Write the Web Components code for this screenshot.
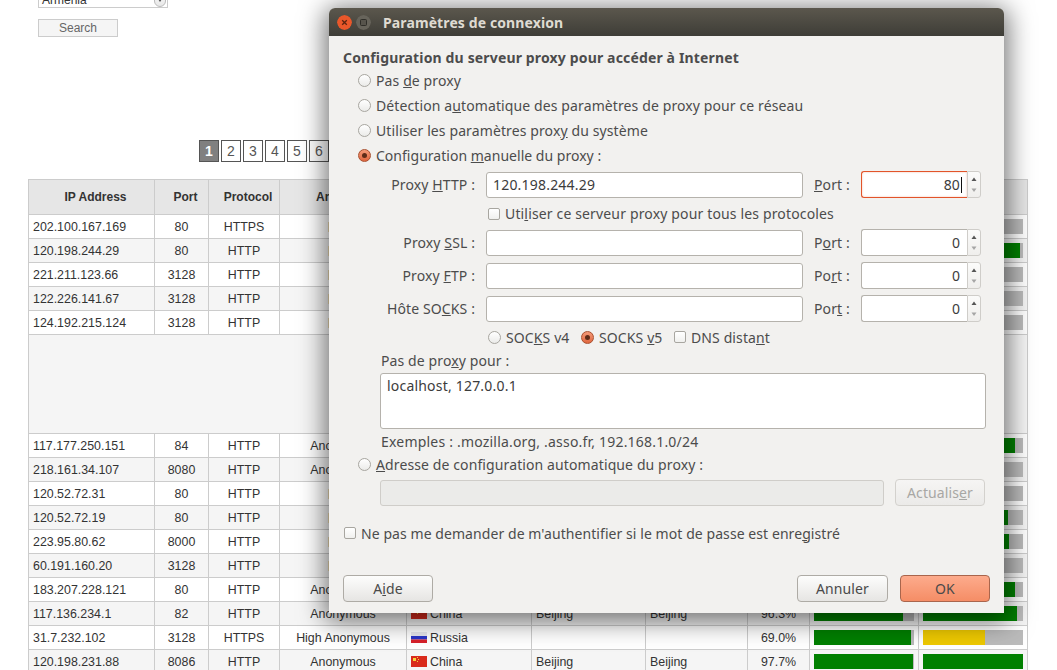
<!DOCTYPE html>
<html>
<head>
<meta charset="utf-8">
<title>Paramètres de connexion</title>
<style>
  html, body { margin: 0; height: 670px; overflow: hidden; background: #fff; }
</style>
</head>
<body>
<proxy-page></proxy-page>

<script>
(function(w, doc) {
  'use strict';

  // stateless element: markup + styles in an open shadow root
  function simple(tag, markup) {
    const template = doc.createElement('template');
    template.innerHTML = markup;
    customElements.define(tag, class extends HTMLElement {
      constructor() {
        super();
        this.attachShadow({ mode: 'open' });
        this.shadowRoot.appendChild(template.content.cloneNode(true));
      }
    });
  }

  /* ---------- page behind the dialog ---------- */

  simple('search-form', `
    <style>
    :host{display:block;margin:-14px 0 0 38px;font:12px "Liberation Sans",sans-serif;color:#333;}
    .select{box-sizing:border-box;width:130px;height:22px;border:1px solid #ccc;background:#fff;padding:3px 0 0 3px;line-height:20px;position:relative;}
    .arrow{position:absolute;right:1px;bottom:0;width:12px;height:20px;border:1px solid #bbb;border-radius:6px;box-sizing:border-box;background:linear-gradient(#fff,#e8e8e8);}
    .arrow:after{content:"";position:absolute;left:3px;bottom:4px;border:2px solid transparent;border-top:3px solid #555;border-bottom:0;}
    button{display:block;box-sizing:border-box;margin:11px 0 0;width:80px;height:18px;padding:0;background:#f5f5f5;border:1px solid #ccc;font:inherit;color:#666;}
    </style>
    <div class="select">Armenia<span class="arrow"></span></div>
    <button>Search</button>
  `);

  simple('page-link', `
    <style>
    :host{display:block;box-sizing:border-box;width:20px;height:22px;border:1px solid #555;background:#fff;color:#555;font:14px/20px "Liberation Sans",sans-serif;text-align:center;}
    :host([active]){background:#808080;color:#fff;font-weight:bold;}
    </style>
    <slot></slot>
  `);

  simple('page-links', `
    <style>
    :host{display:flex;gap:2px;margin:103px 0 0 199px;height:22px;}
    </style>
    <slot></slot>
  `);

  simple('flag-russia', `
    <style>:host{display:inline-block;width:16px;height:11px;vertical-align:-1px;margin-right:3px;}svg{display:block}</style>
    <svg width="16" height="11" viewBox="0 0 16 11">
      <rect width="16" height="4" fill="#e8e8ee"/><rect y="4" width="16" height="3.5" fill="#2a35c8"/><rect y="7.5" width="16" height="3.5" fill="#d8202a"/>
    </svg>
  `);

  simple('flag-china', `
    <style>:host{display:inline-block;width:16px;height:11px;vertical-align:-1px;margin-right:3px;}svg{display:block}</style>
    <svg width="16" height="11" viewBox="0 0 16 11">
      <rect width="16" height="11" fill="#d92a1c"/>
      <rect x="2" y="2" width="3" height="3" fill="#f4d63a"/>
      <rect x="6" y="1" width="1" height="1" fill="#f4d63a"/><rect x="7" y="3" width="1" height="1" fill="#f4d63a"/><rect x="6" y="5" width="1" height="1" fill="#f4d63a"/>
    </svg>
  `);

  const ROWS = [
    ['202.100.167.169','80','HTTPS','e','','','','','',60],
    ['120.198.244.29','80','HTTP','e','','','','','',97],
    ['221.211.123.66','3128','HTTP','e','','','','','',60],
    ['122.226.141.67','3128','HTTP','e','','','','','',60],
    ['124.192.215.124','3128','HTTP','e','','','','','',60],
    'gap',
    ['117.177.250.151','84','HTTP','Anonymous','','','','','',92],
    ['218.161.34.107','8080','HTTP','Anonymous','','','','','',60],
    ['120.52.72.31','80','HTTP','e','','','','','',60],
    ['120.52.72.19','80','HTTP','e','','','','','',85],
    ['223.95.80.62','8000','HTTP','e','','','','','',86],
    ['60.191.160.20','3128','HTTP','e','','','','','',60],
    ['183.207.228.121','80','HTTP','Anonymous','','','','','',92],
    ['117.136.234.1','82','HTTP','Anonymous','China','Beijing','Beijing','96.3%',89,94],
    ['31.7.232.102','3128','HTTPS','High Anonymous','Russia','','','69.0%',97,62],
    ['120.198.231.88','8086','HTTP','Anonymous','China','Beijing','Beijing','97.7%',99,100]
  ];

  const tableTemplate = doc.createElement('template');
  tableTemplate.innerHTML = `
    <style>
    :host{display:block;margin:17px 0 0 28px;width:999px;font:12.4px "Liberation Sans",sans-serif;color:#333;}
    table{border-collapse:collapse;table-layout:fixed;width:999px;}
    th,td{border:1px solid #ccc;padding:0 4px;height:24px;text-align:center;white-space:nowrap;overflow:hidden;box-sizing:border-box;}
    th{height:35px;background:#e6e6e6;padding-left:12px;font-size:12px;}
    td.l{text-align:left;}
    tr:nth-child(even) td{background:#f5f5f5;}
    tr.gap td{height:99px;}
    .elite{display:inline-block;width:30px;height:10px;background:#f3e2b8;vertical-align:-1px;}
    .bar{display:block;width:100px;height:15px;background:#bbb;}
    .bar i{display:block;height:15px;background:#008000;}
    .bar i.mid{background:#eec900;}
    </style>
    <table>
      <colgroup>
        <col style="width:126px"><col style="width:54px"><col style="width:71px"><col style="width:127px"><col style="width:125px">
        <col style="width:114px"><col style="width:102px"><col style="width:62px"><col style="width:109px"><col style="width:109px">
      </colgroup>
      <thead><tr>
        <th>IP Address</th><th>Port</th><th>Protocol</th><th>Anonymity</th><th></th><th></th><th></th><th></th><th></th><th></th>
      </tr></thead>
      <tbody></tbody>
    </table>
  `;

  class ProxyTable extends HTMLElement {
    constructor() {
      super();
      this.attachShadow({ mode: 'open' });
      this.shadowRoot.appendChild(tableTemplate.content.cloneNode(true));
    }

    bar(value) {
      if (value === '') return '';
      const cls = value < 70 && value !== 60 ? 'mid' : '';
      // 60 is a placeholder, the fill is under the dialog
      return `<span class="bar"><i class="${cls}" style="width:${value}%"></i></span>`;
    }

    flag(name) {
      if (name === 'China') return '<flag-china></flag-china>China';
      if (name === 'Russia') return '<flag-russia></flag-russia>Russia';
      return '';
    }

    connectedCallback() {
      this.shadowRoot.querySelector('tbody').innerHTML = ROWS.map(r => {
        if (r === 'gap') return '<tr class="gap"><td colspan="10"></td></tr>';
        const anon = r[3] === 'e' ? '<span class="elite"></span>' : r[3];
        return `<tr><td class="l">${r[0]}</td><td>${r[1]}</td><td>${r[2]}</td><td>${anon}</td>
          <td class="l">${this.flag(r[4])}</td><td class="l">${r[5]}</td><td class="l">${r[6]}</td>
          <td>${r[7]}</td><td>${this.bar(r[8])}</td><td>${this.bar(r[9])}</td></tr>`;
      }).join('');
    }
  }
  customElements.define('proxy-table', ProxyTable);

  /* ---------- gtk style widgets ---------- */

  simple('gtk-radio', `
    <style>
    :host{display:flex;align-items:center;white-space:nowrap;}
    i{box-sizing:border-box;flex:none;width:13px;height:13px;margin-right:5px;border:1px solid #a8a6a0;border-radius:50%;background:linear-gradient(#fff,#ebebe9);position:relative;}
    :host([checked]) i{border-color:#a9502f;background:linear-gradient(#f49a78,#e0673f);}
    :host([checked]) i:after{content:"";position:absolute;left:3px;top:3px;width:5px;height:5px;border-radius:50%;background:#5e2c18;}
    </style>
    <i></i><span><slot></slot></span>
  `);

  simple('gtk-check', `
    <style>
    :host{display:flex;align-items:center;white-space:nowrap;}
    i{box-sizing:border-box;flex:none;width:12px;height:12px;margin-right:5px;border:1px solid #a8a6a0;border-radius:2px;background:linear-gradient(#fff,#f0f0ee);}
    </style>
    <i></i><span><slot></slot></span>
  `);

  simple('gtk-entry', `
    <style>
    :host{display:block;box-sizing:border-box;height:26px;border:1px solid #b5b2ac;border-radius:3px;background:#fff;padding:0 6px;line-height:24px;color:#3c3c3c;white-space:nowrap;letter-spacing:.2px;}
    :host([disabled]){background:#ebebe9;border-color:#cfcdc9;}
    </style>
    <slot></slot>
  `);

  simple('gtk-spin', `
    <style>
    :host{display:flex;width:120px;height:27px;box-sizing:border-box;flex:none;}
    .value{box-sizing:border-box;width:106px;height:27px;border:1px solid #b5b2ac;border-right:0;border-radius:3px 0 0 3px;background:#fff;text-align:right;padding:0 7px;line-height:25px;color:#3c3c3c;}
    :host([focused]) .value{border-color:#e2542a;box-shadow:inset 0 0 2px rgba(240,120,80,.5);position:relative;}
    :host([focused]) .value:after{content:"";display:inline-block;width:1px;height:16px;background:#111;vertical-align:-3px;margin-left:1px;margin-right:-2px;}
    .btns{box-sizing:border-box;width:14px;height:27px;border:1px solid #cfcdc9;border-radius:0 3px 3px 0;background:linear-gradient(#fbfbfa,#efeeec);}
    svg{display:block}
    </style>
    <div class="value"><slot></slot></div>
    <div class="btns">
      <svg width="12" height="25" viewBox="0 0 12 25"><path d="M3.5 9 6 5.5 8.5 9z" fill="#555"/><path d="M3.5 16.5 6 20l2.500-3.500z" fill="#a5a5a5"/></svg>
    </div>
  `);

  simple('gtk-button', `
    <style>
    :host{display:block;box-sizing:border-box;flex:none;width:90px;height:27px;border:1px solid #aeaba5;border-radius:4px;background:linear-gradient(#fdfdfc,#e6e5e3);text-align:center;line-height:25px;color:#4a4a4a;white-space:nowrap;}
    :host([suggested]){border-color:#a9654c;background:linear-gradient(#fdab8c,#f58d66);}
    :host([disabled]){border-color:#d3d1cd;background:linear-gradient(#f6f5f4,#ebeae8);color:#a8a7a4;}
    </style>
    <slot></slot>
  `);

  simple('window-title', `
    <style>
    :host{display:flex;align-items:center;box-sizing:border-box;height:28px;padding-left:8px;background:linear-gradient(#5b574d,#3e3d37);border-radius:6px 6px 0 0;color:#dfdbd2;font-weight:bold;}
    .btn{flex:none;width:15px;height:15px;margin-right:4px;border-radius:50%;}
    svg{display:block}
    .label{margin-left:8px;}
    </style>
    <svg class="btn" viewBox="0 0 15 15"><circle cx="7.500" cy="7.500" r="7.500" fill="#e9572a"/><path d="M5.200 5.200l4.600 4.600M9.800 5.200l-4.600 4.600" stroke="#5c2410" stroke-width="1.300"/></svg>
    <svg class="btn" viewBox="0 0 15 15"><circle cx="7.500" cy="7.500" r="7.500" fill="#67645b"/><rect x="4.500" y="4.500" width="6" height="6" rx="1" fill="#57544c" stroke="#2f2e29"/></svg>
    <span class="label"><slot></slot></span>
  `);

  // one "label / entry / port" line of the proxy grid
  const rowTemplate = doc.createElement('template');
  rowTemplate.innerHTML = `
    <style>
    :host{display:flex;align-items:flex-end;height:27px;margin-top:6px;}
    :host([first]){margin-top:3px;}
    .name{width:132px;margin:0 11px 0 0;text-align:right;line-height:26px;white-space:nowrap;}
    gtk-entry{width:317px;}
    .port{box-sizing:border-box;width:58px;padding-left:11px;line-height:26px;white-space:nowrap;}
    </style>
    <div class="name"><slot name="name"></slot></div>
    <gtk-entry><slot name="value"></slot></gtk-entry>
    <div class="port"><slot name="port"></slot></div>
    <gtk-spin><slot name="num"></slot></gtk-spin>
  `;
  class ProxyRow extends HTMLElement {
    constructor() {
      super();
      this.attachShadow({ mode: 'open' });
      this.shadowRoot.appendChild(rowTemplate.content.cloneNode(true));
    }
    connectedCallback() {
      if (this.hasAttribute('focused')) this.shadowRoot.querySelector('gtk-spin').setAttribute('focused', '');
    }
  }
  customElements.define('proxy-row', ProxyRow);

  simple('connection-dialog', `
    <style>
    :host{position:absolute;left:329px;top:8px;width:675px;height:605px;background:#f2f1ef;border-radius:6px 6px 0 0;box-shadow:0 4px 26px 4px rgba(0,0,0,.55);font:14px "Noto Sans",sans-serif;color:#4c4c4c;letter-spacing:.11px;}
    .body{padding:12px 14px 0;}
    h1{margin:0;font-size:14px;line-height:20px;font-weight:bold;white-space:nowrap;letter-spacing:.15px;}
    .opt{height:25px;margin-left:15px;}
    .manual{letter-spacing:.02px;}
    .sub{height:31px;margin-left:145px;letter-spacing:.15px;}
    .socks{display:flex;box-sizing:border-box;height:32px;padding-bottom:2px;align-items:center;margin-left:145px;}
    .socks .v4{width:93px;}
    .socks .v5{width:93px;}
    .nolabel{height:19px;line-height:13px;margin-left:38px;}
    .area{box-sizing:border-box;width:606px;height:56px;margin-left:37px;border:1px solid #b5b2ac;border-radius:3px;background:#fff;padding:2px 6px;line-height:20px;color:#3c3c3c;letter-spacing:.2px;}
    .hint{height:25px;line-height:26px;margin-left:38px;white-space:nowrap;letter-spacing:.2px;}
    .auto{height:20px;margin-left:15px;}
    .autorow{display:flex;align-items:flex-end;height:27px;margin:5px 0 0 37px;}
    .autorow gtk-entry{width:504px;margin-right:11px;}
    .remember{height:24px;margin:15px 0 0 1px;letter-spacing:.07px;}
    .actions{display:flex;margin-top:30px;gap:12px;}
    .actions .aide{margin-right:auto;}
    .actions .annuler{width:91px;}
    </style>
    <window-title>Paramètres de connexion</window-title>
    <div class="body">
      <h1>Configuration du serveur proxy pour accéder à Internet</h1>
      <gtk-radio class="opt">Pas <u>d</u>e proxy</gtk-radio>
      <gtk-radio class="opt">Détection a<u>u</u>tomatique des paramètres de proxy pour ce réseau</gtk-radio>
      <gtk-radio class="opt">Utiliser les paramètres prox<u>y</u> du système</gtk-radio>
      <gtk-radio class="opt manual" checked>Configuration <u>m</u>anuelle du proxy :</gtk-radio>

      <proxy-row first focused>
        <span slot="name">Proxy <u>H</u>TTP :</span><span slot="value">120.198.244.29</span>
        <span slot="port"><u>P</u>ort :</span><span slot="num">80</span>
      </proxy-row>
      <gtk-check class="sub">Uti<u>l</u>iser ce serveur proxy pour tous les protocoles</gtk-check>
      <proxy-row style="margin-top:0">
        <span slot="name">Proxy <u>S</u>SL :</span>
        <span slot="port">P<u>o</u>rt :</span><span slot="num">0</span>
      </proxy-row>
      <proxy-row>
        <span slot="name">Proxy <u>F</u>TP :</span>
        <span slot="port">Po<u>r</u>t :</span><span slot="num">0</span>
      </proxy-row>
      <proxy-row>
        <span slot="name">Hôte SO<u>C</u>KS :</span>
        <span slot="port">Por<u>t</u> :</span><span slot="num">0</span>
      </proxy-row>

      <div class="socks">
        <gtk-radio class="v4">SOC<u>K</u>S v4</gtk-radio>
        <gtk-radio class="v5" checked>SOCKS <u>v</u>5</gtk-radio>
        <gtk-check>DNS dista<u>n</u>t</gtk-check>
      </div>

      <div class="nolabel">Pas de pro<u>x</u>y pour :</div>
      <div class="area">localhost, 127.0.0.1</div>
      <div class="hint">Exemples : .mozilla.org, .asso.fr, 192.168.1.0/24</div>

      <gtk-radio class="auto"><u>A</u>dresse de configuration automatique du proxy :</gtk-radio>
      <div class="autorow">
        <gtk-entry disabled></gtk-entry>
        <gtk-button disabled>Actualis<u>e</u>r</gtk-button>
      </div>

      <gtk-check class="remember">Ne pas me demander de m'authentifier si le mot de passe est enre<u>g</u>istré</gtk-check>

      <div class="actions">
        <gtk-button class="aide">A<u>i</u>de</gtk-button>
        <gtk-button class="annuler">Annuler</gtk-button>
        <gtk-button suggested>OK</gtk-button>
      </div>
    </div>
  `);

  simple('proxy-page', `
    <style>
    :host{display:block;width:1057px;height:670px;overflow:hidden;position:relative;}
    </style>
    <search-form></search-form>
    <page-links>
      <page-link active>1</page-link><page-link>2</page-link><page-link>3</page-link>
      <page-link>4</page-link><page-link>5</page-link><page-link>6</page-link>
    </page-links>
    <proxy-table></proxy-table>
    <connection-dialog></connection-dialog>
  `);

})(window, document);
</script>
</body>
</html>
